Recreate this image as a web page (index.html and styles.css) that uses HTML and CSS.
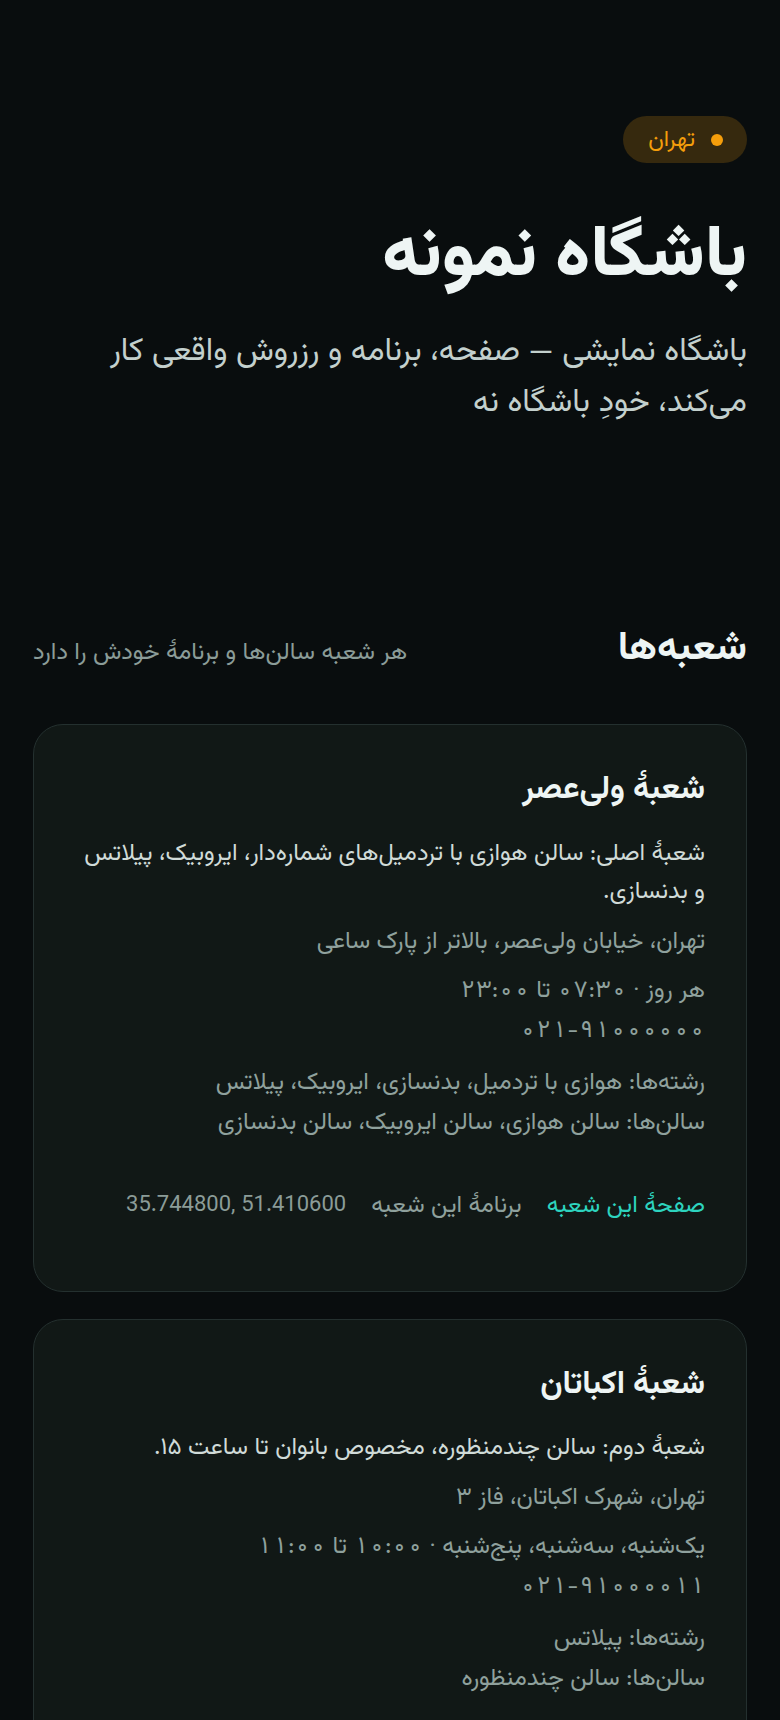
FILE: index.html
```html
<!DOCTYPE html>
<html lang="fa" dir="rtl">
<head>
<meta charset="utf-8">
<title>باشگاه نمونه</title>
<link rel="stylesheet" href="styles.css">
</head>
<body>
<main class="page">
  <header class="hero">
    <span class="pill"><span class="dot"></span>تهران</span>
    <h1 class="title">باشگاه نمونه</h1>
    <p class="lead">باشگاه نمایشی — صفحه، برنامه و رزروش واقعی کار می‌کند، خودِ باشگاه نه</p>
  </header>

  <section class="branches">
    <div class="section-head">
      <h2 class="section-title">شعبه‌ها</h2>
      <p class="section-sub">هر شعبه سالن‌ها و برنامهٔ خودش را دارد</p>
    </div>

    <article class="card">
      <h3 class="card-title">شعبهٔ ولی‌عصر</h3>
      <p class="card-desc">شعبهٔ اصلی: سالن هوازی با تردمیل‌های شماره‌دار، ایروبیک، پیلاتس و بدنسازی.</p>
      <p class="address">تهران، خیابان ولی‌عصر، بالاتر از پارک ساعی</p>
      <div class="meta nums">
        <p>هر روز · ۰۷:۳۰ تا ۲۳:۰۰</p>
        <p>۰۲۱-۹۱۰۰۰۰۰۰</p>
      </div>
      <div class="meta">
        <p>رشته‌ها: هوازی با تردمیل، بدنسازی، ایروبیک، پیلاتس</p>
        <p>سالن‌ها: سالن هوازی، سالن ایروبیک، سالن بدنسازی</p>
      </div>
      <div class="links">
        <a class="link primary" href="#">صفحهٔ این شعبه</a>
        <a class="link" href="#">برنامهٔ این شعبه</a>
        <span class="coords" dir="ltr">35.744800, 51.410600</span>
      </div>
    </article>

    <article class="card">
      <h3 class="card-title">شعبهٔ اکباتان</h3>
      <p class="card-desc">شعبهٔ دوم: سالن چندمنظوره، مخصوص بانوان تا ساعت ۱۵.</p>
      <p class="address">تهران، شهرک اکباتان، فاز ۳</p>
      <div class="meta nums">
        <p>یک‌شنبه، سه‌شنبه، پنج‌شنبه · ۱۰:۰۰ تا ۱۱:۰۰</p>
        <p>۰۲۱-۹۱۰۰۰۰۱۱</p>
      </div>
      <div class="meta">
        <p>رشته‌ها: پیلاتس</p>
        <p>سالن‌ها: سالن چندمنظوره</p>
      </div>
    </article>
  </section>
</main>
</body>
</html>
```

FILE: styles.css
```css
* { box-sizing: border-box; }
html, body { margin: 0; padding: 0; }
body {
  background: #090d0e;
  color: #eef4f3;
  font-family: Vazirmatn, Roboto, "DejaVu Sans", sans-serif;
}
.page {
  padding: 116px 33px 40px;
}
.hero {
  display: flex;
  flex-direction: column;
  align-items: flex-start;
}
.pill {
  display: inline-flex;
  align-items: center;
  gap: 16px;
  height: 47px;
  padding: 0 24px 0 25px;
  border-radius: 999px;
  background: #36290e;
  color: #f59e0b;
  font-size: 23px;
}
.dot {
  width: 12px;
  height: 12px;
  border-radius: 50%;
  background: #f59e0b;
}
.title {
  margin: 48px 0 0;
  font-size: 72px;
  font-weight: 800;
  line-height: 1.3;
  color: #eef5f4;
}
.lead {
  margin: 22px 0 0;
  font-size: 32px;
  line-height: 1.6;
  color: #c3d0cd;
}
.branches {
  margin-top: 192px;
}
.section-head {
  display: flex;
  align-items: baseline;
  justify-content: space-between;
  margin-bottom: 47px;
}
.section-title {
  margin: 0;
  font-size: 40px;
  font-weight: 700;
  line-height: 1.4;
  color: #eef5f4;
}
.section-sub {
  margin: 0;
  font-size: 24px;
  color: #8b9c98;
}
.card {
  background: #111816;
  border: 1px solid #24302f;
  border-radius: 30px;
  padding: 43px 41px 65px;
  margin-bottom: 27px;
}
.card-title {
  margin: 0 0 22px;
  font-size: 32px;
  font-weight: 700;
  line-height: 1.4;
  color: #eef5f4;
}
.card-desc {
  margin: 0;
  font-size: 24px;
  line-height: 1.6;
  color: #d0dbd8;
}
.address {
  margin: 10px 0 0;
  font-size: 24px;
  line-height: 40px;
  color: #8fa19d;
}
.meta {
  margin-top: 9px;
}
.meta + .meta {
  margin-top: 12px;
}
.meta p {
  margin: 0;
  font-size: 24px;
  line-height: 40px;
  color: #8fa19d;
}
.nums p {
  font-variant-numeric: tabular-nums;
}
.links {
  display: flex;
  align-items: center;
  gap: 25px;
  margin-top: 43px;
  font-size: 24px;
  line-height: 40px;
}
.link {
  text-decoration: none;
  color: #8fa19d;
}
.link.primary {
  color: #2dd4bf;
}
.coords {
  color: #8b9c98;
  font-size: 22px;
}
```
